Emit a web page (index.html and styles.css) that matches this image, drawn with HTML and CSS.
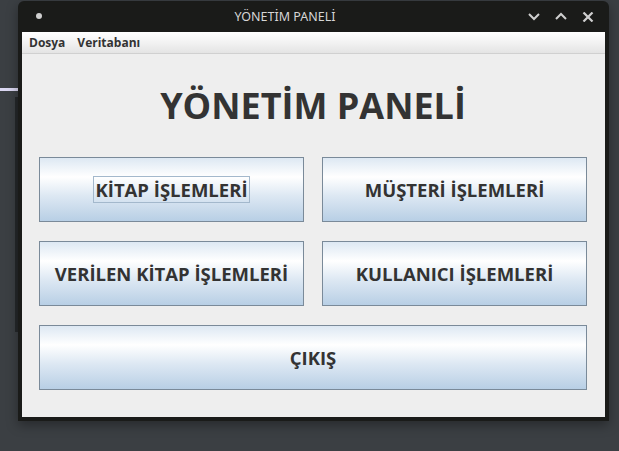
FILE: index.html
```html
<!DOCTYPE html>
<html lang="tr">
<head>
<meta charset="utf-8">
<title>YÖNETİM PANELİ</title>
<link rel="stylesheet" href="styles.css">
</head>
<body>
<div class="desktop">
  <div class="bg-line"></div>
  <div class="bg-window"></div>
  <div class="window">
    <div class="titlebar">
      <span class="dot"></span>
      <span class="wtitle">YÖNETİM PANELİ</span>
      <div class="controls">
        <svg width="12" height="9" viewBox="0 0 12 9"><path d="M1 2 L6 7 L11 2" stroke="#cfcfcf" stroke-width="2" fill="none"/></svg>
        <svg width="12" height="9" viewBox="0 0 12 9"><path d="M1 7 L6 2 L11 7" stroke="#cfcfcf" stroke-width="2" fill="none"/></svg>
        <svg width="12" height="10" viewBox="0 0 12 10"><path d="M1.5 0.5 L10.5 9.5 M10.5 0.5 L1.5 9.5" stroke="#cfcfcf" stroke-width="2.2" fill="none"/></svg>
      </div>
    </div>
    <div class="client">
      <div class="menubar"><span>Dosya</span><span>Veritabanı</span></div>
      <div class="panel">
        <h1 class="heading">YÖNETİM PANELİ</h1>
        <div class="grid">
          <button class="btn"><span class="focus">KİTAP İŞLEMLERİ</span></button>
          <button class="btn">MÜŞTERİ İŞLEMLERİ</button>
          <button class="btn">VERİLEN KİTAP İŞLEMLERİ</button>
          <button class="btn">KULLANICI İŞLEMLERİ</button>
          <button class="btn wide">ÇIKIŞ</button>
        </div>
      </div>
    </div>
  </div>
</div>
</body>
</html>
```

FILE: styles.css
```css
html, body {
  margin: 0;
  padding: 0;
}
body {
  width: 619px;
  height: 451px;
  overflow: hidden;
  background: #3b3f43;
  font-family: "Open Sans", "Noto Sans", sans-serif;
}
.desktop {
  position: relative;
  width: 619px;
  height: 451px;
}
.bg-line {
  position: absolute;
  left: 0;
  top: 88px;
  width: 18px;
  height: 3px;
  background: #dad7f1;
}
.bg-window {
  position: absolute;
  left: 15px;
  top: 97px;
  width: 3px;
  height: 235px;
  background: #25282a;
}
.window {
  position: absolute;
  left: 18px;
  top: 1px;
  width: 591px;
  height: 420px;
  background: #1a1b19;
  border-radius: 6px 6px 0 0;
  display: flex;
  flex-direction: column;
  box-shadow: 0 4px 12px rgba(0, 0, 0, 0.35);
}
.titlebar {
  height: 31px;
  display: flex;
  align-items: center;
  padding: 0 15px 0 18px;
}
.dot {
  width: 6px;
  height: 6px;
  border-radius: 50%;
  background: #cfcfcf;
  margin-top: -1px;
}
.wtitle {
  flex: 1;
  text-align: center;
  color: #d6d6d6;
  font-size: 12.5px;
  font-family: "Noto Sans", sans-serif;
}
.controls {
  display: flex;
  align-items: center;
  gap: 15px;
}
.controls svg {
  display: block;
}
.client {
  flex: 1;
  margin: 0 4px 4px 4px;
  background: #eeeeee;
  display: flex;
  flex-direction: column;
}
.menubar {
  height: 21px;
  border-bottom: 1px solid #d0d0d0;
  background: linear-gradient(to bottom, #ffffff 0%, #f2f2f2 50%, #e4e4e4 100%);
  display: flex;
  align-items: center;
  gap: 12px;
  padding-left: 7px;
  font-size: 12px;
  font-weight: bold;
  color: #333333;
}
.panel {
  flex: 1;
  padding: 0 18px 0 17px;
}
.heading {
  margin: 0;
  padding: 27px 0 27px 0;
  line-height: 49px;
  font-size: 36px;
  font-weight: bold;
  color: #333333;
  text-align: center;
}
.grid {
  display: grid;
  grid-template-columns: 265px 265px;
  grid-auto-rows: 65px;
  column-gap: 18px;
  row-gap: 19px;
}
.btn {
  margin: 0;
  padding: 0;
  border: 1px solid #7a8a99;
  border-radius: 0;
  background: linear-gradient(to bottom, #dde8f3 0%, #ffffff 30%, #dde8f3 60%, #b8cfe5 100%);
  font-family: "Open Sans", "Noto Sans", sans-serif;
  font-size: 18.5px;
  font-weight: bold;
  color: #333333;
  display: flex;
  align-items: center;
  justify-content: center;
}
.btn.wide {
  grid-column: 1 / span 2;
}
.focus {
  display: inline-block;
  border: 1px solid #a3b8cc;
  line-height: 25px;
  padding: 0 1px;
}
```
